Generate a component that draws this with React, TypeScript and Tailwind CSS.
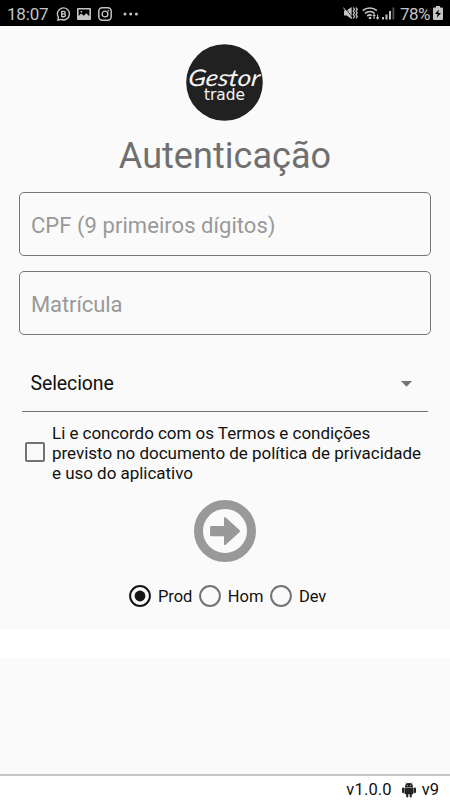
import React from "react";

function StatusBar() {
  return (
    <header className="flex h-[26px] shrink-0 items-center justify-between bg-black pl-[7px] pr-[7px] text-[#c4c4c4]">
      <div className="flex items-center">
        <span className="w-[49px] pt-0.5 text-[17px] leading-6 tracking-[-0.2px]">18:07</span>
        <svg className="mt-0.5" width="15" height="16" viewBox="0 0 15 16" fill="none" stroke="currentColor">
          <path d="M2 14.200l.4-3A6 6 0 1 1 5 13.400z" strokeWidth="1.400" />
          <path d="M5.700 5v6M5.700 5.400h2.200a1.200 1.200 0 0 1 0 2.500H5.700M8 7.900a1.400 1.400 0 0 1 0 2.800H5.700" strokeWidth="1.400" />
        </svg>
        <svg className="ml-[6px] mt-0.5" width="14" height="12" viewBox="0 0 14 12">
          <path fillRule="evenodd" fill="currentColor" d="M1 0h12a1 1 0 0 1 1 1v10a1 1 0 0 1-1 1H1a1 1 0 0 1-1-1V1a1 1 0 0 1 1-1zM1.600 1.600v6.300l2.600-2.300 2.500 2.200 2.600-2.600 3.100 3V1.600zM3.600 3h1.500v1.500H3.600z" />
        </svg>
        <svg className="ml-[7px] mt-0.5" width="14" height="14" viewBox="0 0 14 14" fill="none" stroke="currentColor">
          <rect x=".8" y=".8" width="12.400" height="12.400" rx="3.400" strokeWidth="1.500" />
          <circle cx="7" cy="7" r="2.900" strokeWidth="1.400" />
          <circle cx="10.400" cy="3.600" r=".8" fill="currentColor" stroke="none" />
        </svg>
        <svg className="ml-[11px] mt-0.5" width="16" height="4" viewBox="0 0 16 4" fill="currentColor">
          <circle cx="2" cy="2" r="1.500" /><circle cx="7.700" cy="2" r="1.500" /><circle cx="13.400" cy="2" r="1.500" />
        </svg>
      </div>
      <div className="flex items-center">
        <svg width="15" height="14" viewBox="0 0 15 14" fill="none" stroke="currentColor">
          <path d="M1 4.600h2.600L8.600 1v12L3.600 9.400H1z" fill="currentColor" stroke="none" />
          <path d="M1.500 1l8.500 11" stroke="#000" strokeWidth=".7" />
          <path d="M.4 1.600l8.500 11" strokeWidth="1" />
          <path d="M10.300 1.500l1.200 1.800-1.200 1.800 1.200 1.800-1.200 1.800 1.200 1.800-1.200 1.800M13 1.500l1.200 1.800L13 5.100l1.200 1.800L13 8.700l1.200 1.800-1.200 1.800" strokeWidth="1.300" />
        </svg>
        <svg className="ml-[4px]" width="18" height="14" viewBox="0 0 18 14" fill="none" stroke="currentColor">
          <path d="M.7 4.600a11 11 0 0 1 14.200 0" strokeWidth="1.700" />
          <path d="M3 7.400a7.600 7.600 0 0 1 9.600 0M5.200 10a4 4 0 0 1 4.600-.4" strokeWidth="1.700" />
          <circle cx="8" cy="12" r="1.300" fill="currentColor" stroke="none" />
          <path d="M12.100 13V8.600M10.800 10l1.300-1.500 1.300 1.500M15.600 8.400v4.400M14.300 11.400l1.300 1.500 1.300-1.500" strokeWidth="1.100" />
        </svg>
        <svg className="ml-[2px]" width="13" height="14" viewBox="0 0 13 14" fill="currentColor">
          <path d="M0 11h2v2.500H0zM3.500 8.500h2v5h-2zM7 5h2v8.500H7z" />
          <path d="M10.500 1.500h1.800v12h-1.800z" fill="#555" />
        </svg>
        <span className="ml-[5px] w-[31px] pt-0.5 text-[17px] leading-6 tracking-[-0.6px]">78%</span>
        <svg className="ml-[2px]" width="10" height="14" viewBox="0 0 10 14">
          <path d="M3 0h4v1.500h2a1 1 0 0 1 1 1V13a1 1 0 0 1-1 1H1a1 1 0 0 1-1-1V2.500a1 1 0 0 1 1-1h2z" fill="currentColor" />
          <path d="M5.800 3.500L2 8h2.600l-.7 3.800L8 7H5.400z" fill="#000" />
        </svg>
      </div>
    </header>
  );
}

function Logo() {
  return (
    <svg className="mx-auto mt-[18px] block" width="78" height="78" viewBox="0 0 78 78">
      <circle cx="38.500" cy="38.500" r="38.300" fill="#212121" />
      <text transform="translate(1.500 42) skewX(-7)" textLength="72" lengthAdjust="spacingAndGlyphs" fill="#f5f5f5" fontFamily="Lato, sans-serif" fontStyle="italic" fontSize="23">Gestor</text>
      <path d="M9.500 36q5-1.500 9.500-2.500M41.500 31.500q5 .5 9.500-1" fill="none" stroke="#f5f5f5" strokeWidth="1.500" />
      <text x="18" y="56" textLength="41" lengthAdjust="spacingAndGlyphs" fill="#f5f5f5" fontFamily="DejaVu Sans, sans-serif" fontSize="15.500">trade</text>
    </svg>
  );
}

function Radio({ label, checked = false }: { label: string; checked?: boolean }) {
  return (
    <label className="flex items-center">
      <svg width="22" height="22" viewBox="0 0 22 22" fill="none">
        <circle cx="11" cy="11" r="9.900" stroke={checked ? "#151515" : "#737373"} strokeWidth="2" />
        {checked && <circle cx="11" cy="11" r="5.400" fill="#151515" />}
      </svg>
      <span className="ml-[7px] pt-0.5 text-[16.500px] leading-5 tracking-[-0.05px] text-[#111]">{label}</span>
    </label>
  );
}

export default function App() {
  return (
    <div className="flex h-[800px] w-[450px] flex-col overflow-hidden bg-[#fafafa] font-['Roboto',sans-serif]">
      <StatusBar />
      <main className="flex h-[603px] shrink-0 flex-col">
        <Logo />
        <h1 className="mt-[13px] text-center text-[36px] leading-[42px] tracking-[0.05px] text-[#6f6f6f]">Autenticação</h1>
        <div className="ml-[19px] mt-[15px] flex h-[64px] w-[412px] shrink-0 items-center rounded-[5px] border border-[#777] pl-[11px] pt-0.5 text-[22px] tracking-[0.05px] text-[#999]">CPF (9 primeiros dígitos)</div>
        <div className="ml-[19px] mt-[15px] flex h-[64px] w-[412px] shrink-0 items-center rounded-[5px] border border-[#777] pl-[11px] pt-0.5 text-[22px] tracking-[-0.1px] text-[#999]">Matrícula</div>
        <div className="ml-[22px] mt-[20px] flex h-[57px] w-[406px] shrink-0 items-center justify-between border-b border-[#707070] pl-[8.500px] pr-[16px] pt-0.5">
          <span className="text-[19.500px] tracking-[-0.1px] text-[#111]">Selecione</span>
          <svg width="11" height="6" viewBox="0 0 11 6"><path d="M0 0h11L5.500 5.700z" fill="#737373" /></svg>
        </div>
        <label className="mt-[11px] flex items-center pl-[25px]">
          <span className="mb-0.5 h-5 w-5 shrink-0 rounded-[2px] border-2 border-[#737373]" />
          <span className="ml-[7px] whitespace-nowrap text-[17px] leading-5 tracking-[-0.030px] text-[#111]">
            Li e concordo com os Termos e condições<br />previsto no documento de política de privacidade<br />e uso do aplicativo
          </span>
        </label>
        <svg className="mx-auto mt-[17px] block shrink-0" width="62" height="62" viewBox="0 0 62 62">
          <circle cx="31" cy="31" r="26.500" fill="none" stroke="#999" strokeWidth="9" />
          <path d="M17.500 26h12.500V18.500q0-2.500 2-.8l13.500 12.300q1.100 1.100 0 2.200l-13.500 12.300q-2 1.700-2-.8v-7.500h-12.500q-1.500 0-1.500-1.500V27.500q0-1.500 1.500-1.500z" fill="#999" />
        </svg>
        <div className="ml-[129px] mt-[23px] flex gap-[6.500px]">
          <Radio label="Prod" checked /><Radio label="Hom" /><Radio label="Dev" />
        </div>
      </main>
      <div className="h-[29px] shrink-0 bg-white" />
      <div className="flex-1" />
      <footer className="flex h-[26px] shrink-0 items-center justify-end border-t-2 border-[#c6c6c6] bg-white pr-[11px] pt-1 text-[16.500px] text-[#111]">
        <span className="tracking-[0.15px]">v1.0.0</span>
        <svg className="ml-[10px] mr-[6px]" width="14" height="16" viewBox="0 0 14 16" fill="#222">
          <path d="M3 5a4 4 0 0 1 8 0z" />
          <path d="M3.800.5l1.400 2M10.200.5l-1.400 2" stroke="#222" strokeWidth=".6" />
          <path d="M2.500 5.600h9v5.700a1 1 0 0 1-1 1h-7a1 1 0 0 1-1-1z" />
          <rect y="5.500" width="2.200" height="5.700" rx="1.100" /><rect x="11.800" y="5.500" width="2.200" height="5.700" rx="1.100" />
          <rect x="4.200" y="10" width="2.100" height="5.500" rx="1" /><rect x="7.700" y="10" width="2.100" height="5.500" rx="1" />
          <circle cx="5.200" cy="3.500" r=".5" fill="#fff" /><circle cx="8.800" cy="3.500" r=".5" fill="#fff" />
        </svg>
        <span>v9</span>
      </footer>
    </div>
  );
}
